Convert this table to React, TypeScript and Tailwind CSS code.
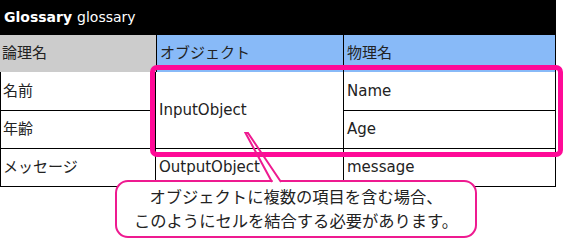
const font = { fontFamily: '"DejaVu Sans", "Noto Sans CJK JP", sans-serif' };

const rows = [
  { logical: "名前", physical: "Name" },
  { logical: "年齢", physical: "Age" },
];

export default function App() {
  return (
    <div className="relative h-[240px] w-[565px] overflow-hidden bg-white text-black" style={font}>
      <div className="w-[556px]">
        <div className="flex h-[35px] items-center bg-black px-[4px] text-[14px] text-white">
          <span className="font-bold">Glossary</span>
          <span className="ml-[5px]">glossary</span>
        </div>

        <div className="grid grid-cols-[156px_187px_213px] grid-rows-[37px_39px_38px_38px] text-[15px] text-[#222]">
          <div className="flex items-center bg-[#cccccc] pl-[2px]">論理名</div>
          <div className="flex items-center border-l border-black bg-[#88baf8] pl-[3px]">オブジェクト</div>
          <div className="flex items-center border-x border-black bg-[#88baf8] pl-[3px]">物理名</div>

          <div className="flex items-center border-x border-b border-black pl-[2px]">{rows[0].logical}</div>
          <div className="row-span-2 flex items-center border-b border-black pl-[3px]">InputObject</div>
          <div className="flex items-center border-x border-b border-black pl-[3px]">{rows[0].physical}</div>

          <div className="flex items-center border-x border-b border-black pl-[2px]">{rows[1].logical}</div>
          <div className="flex items-center border-x border-b border-black pl-[3px]">{rows[1].physical}</div>

          <div className="flex items-center border-x border-b border-black pl-[2px]">メッセージ</div>
          <div className="flex items-center border-b border-black pl-[3px]">OutputObject</div>
          <div className="flex items-center border-x border-b border-black pl-[3px]">message</div>
        </div>
      </div>

      {/* merged-cell highlight */}
      <div className="absolute left-[150px] top-[65px] h-[92px] w-[413px] rounded-[7px] border-[5px] border-[#ff0a97]" />

      {/* callout bubble */}
      <div className="absolute left-[115px] top-[180px] flex h-[58px] w-[362px] flex-col items-center justify-center rounded-[13px] border-2 border-[#ee1a90] bg-white pt-[1px] text-[16.3px] leading-[24px] text-[#222]">
        <span>オブジェクトに複数の項目を含む場合、</span>
        <span>このようにセルを結合する必要があります。</span>
      </div>
      <svg className="absolute left-0 top-0" width="565" height="240" viewBox="0 0 565 240">
        <line x1="272.5" y1="181" x2="281" y2="181" stroke="white" strokeWidth="3" />
        <polyline points="272,182 245.5,133 248,133 281,182" fill="none" stroke="#ee1a90" strokeWidth="2" />
      </svg>
    </div>
  );
}
